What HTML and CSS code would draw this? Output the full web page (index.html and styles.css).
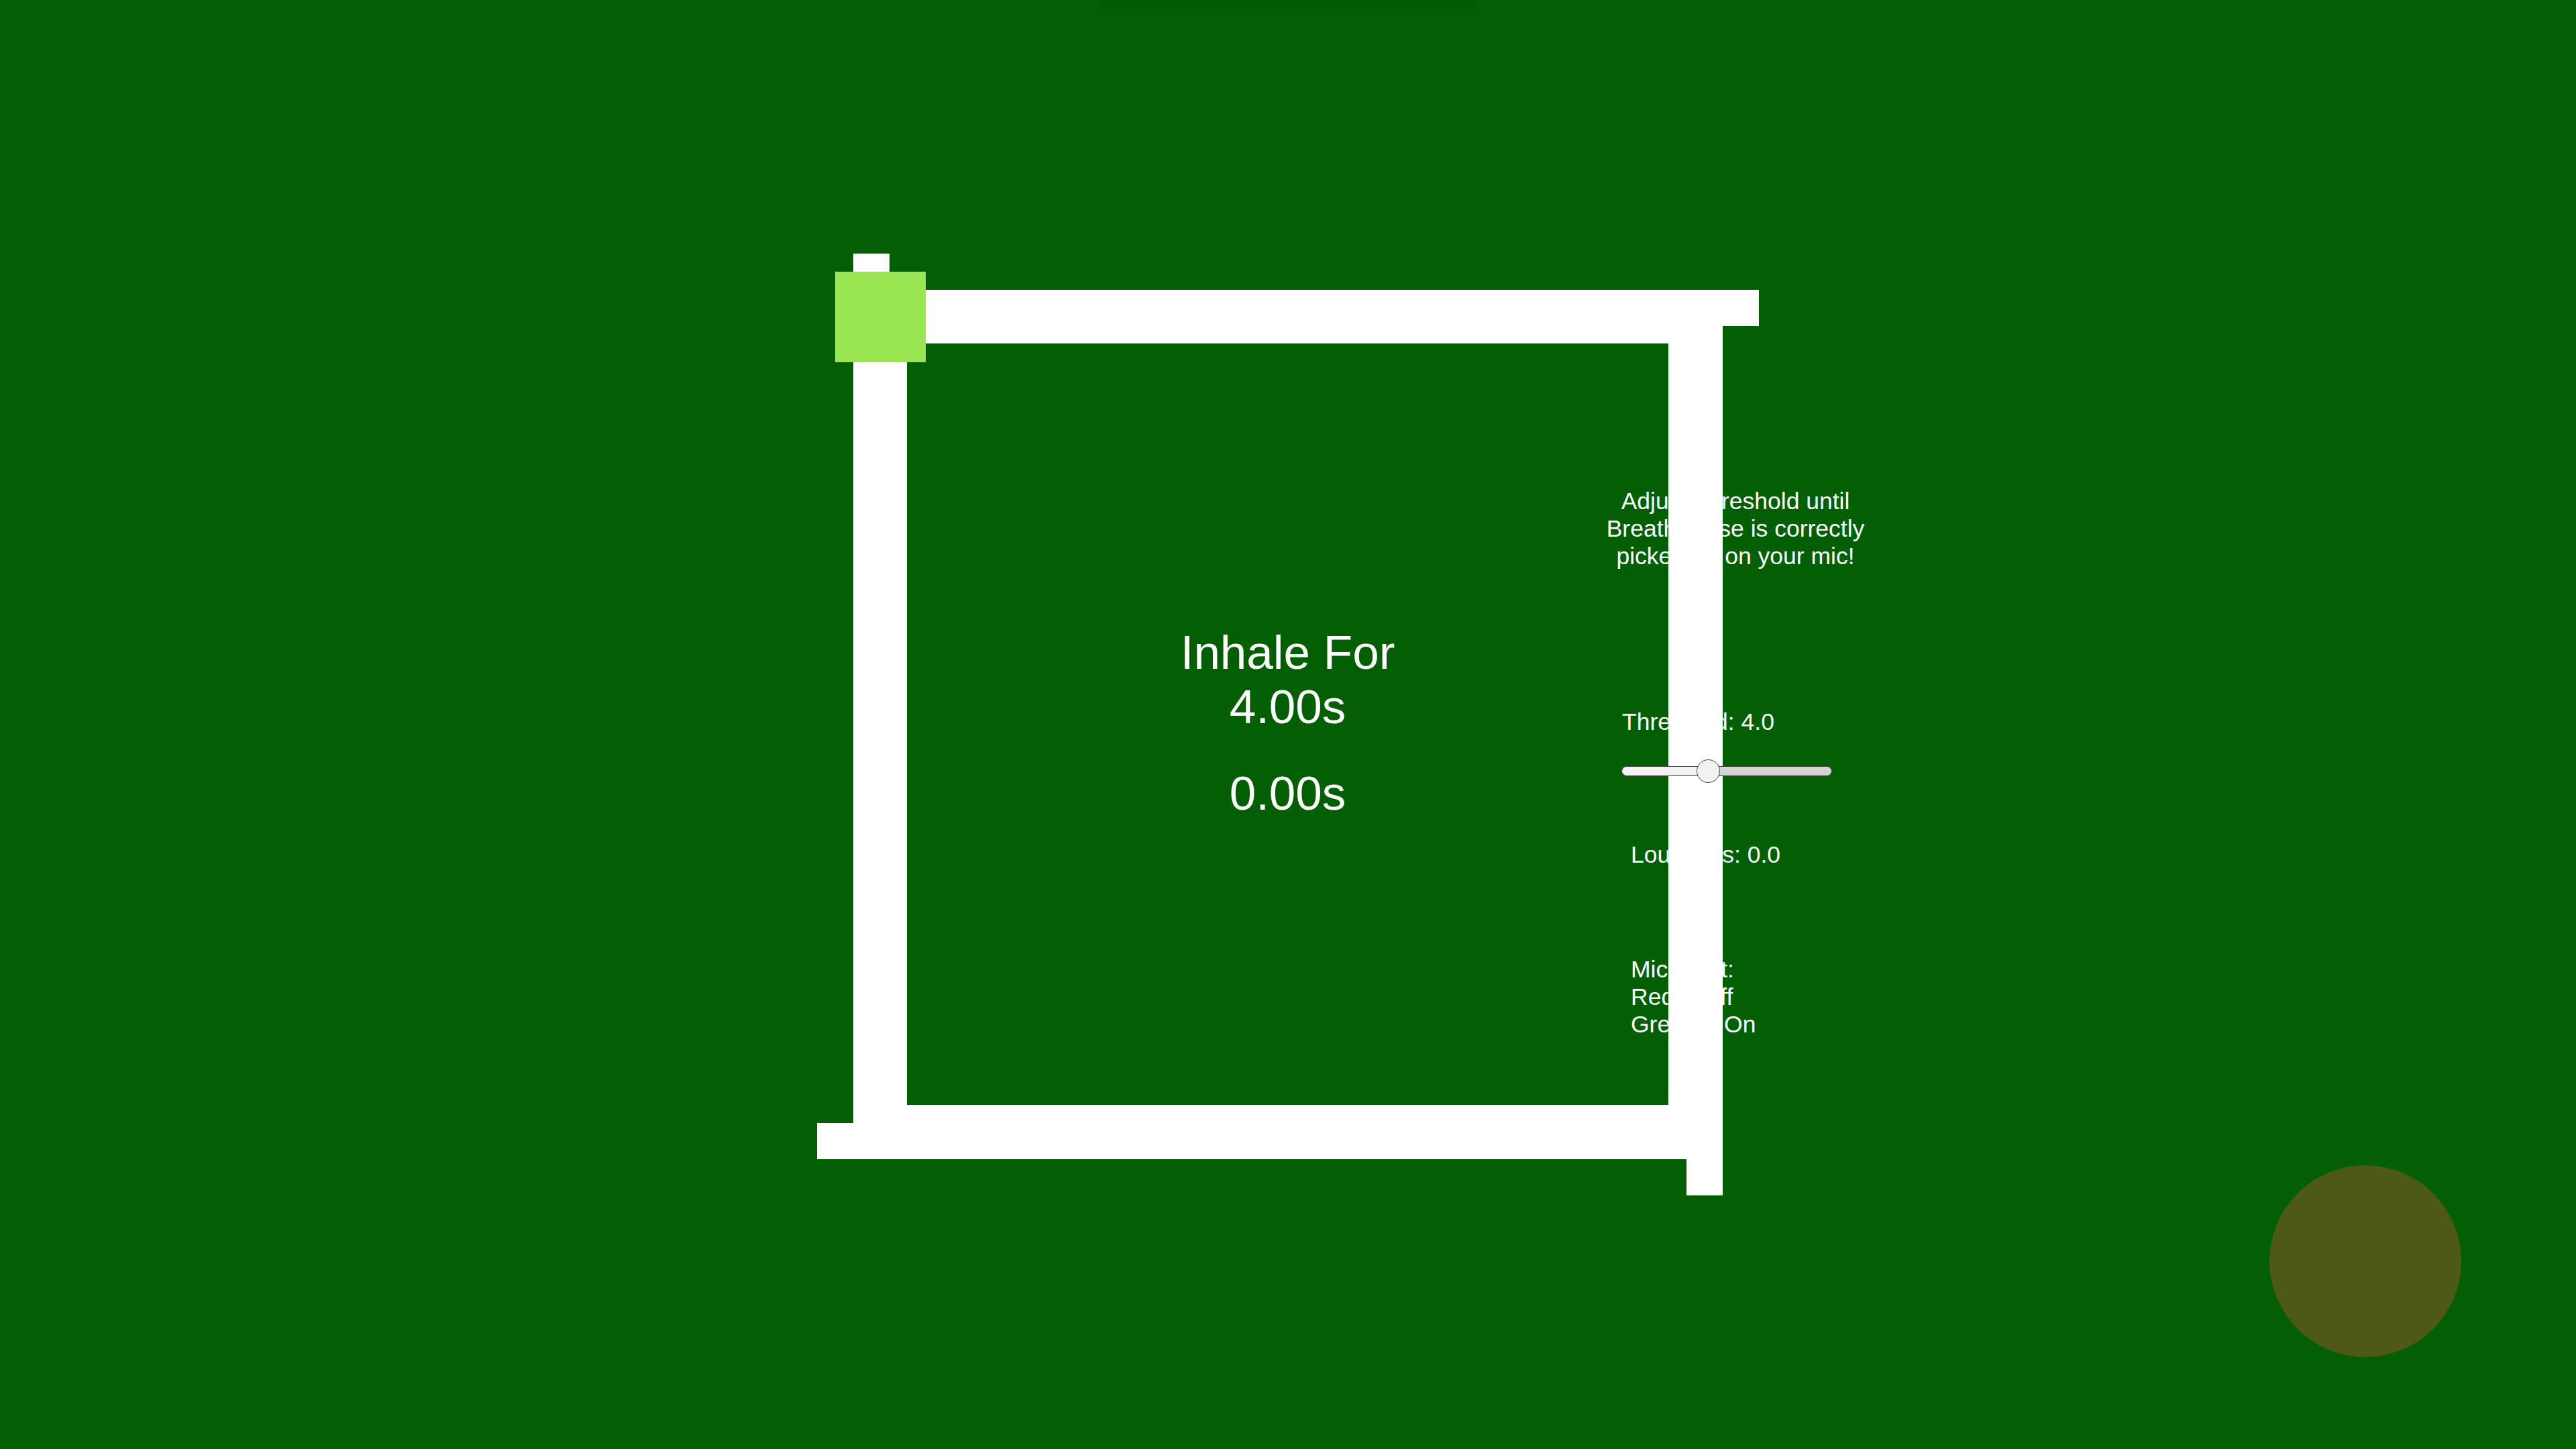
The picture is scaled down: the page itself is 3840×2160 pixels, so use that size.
FILE: index.html
```html
<!DOCTYPE html>
<html lang="en">
<head>
    <meta charset="UTF-8">
    <meta name="viewport" content="width=device-width, initial-scale=1.0">
    <title>Box Breathing</title>
    <link rel="stylesheet" href="styles.css">
</head>
<body>

    <div class="top-shade"></div>

    <div class="box">
        <span class="stub stub-top"></span>
        <span class="stub stub-right"></span>
        <span class="stub stub-bottom"></span>
        <span class="stub stub-left"></span>

        <div class="box-inner">
            <div class="phase">Inhale For<br>4.00s</div>
            <div class="timer">0.00s</div>
        </div>

        <div class="marker"></div>
    </div>

    <div class="mic-panel">
        <p class="hint">Adjust Threshold until<br>Breath Noise is correctly<br>picked up on your mic!</p>
        <p class="threshold">Threshold: 4.0</p>
        <div class="slider">
            <div class="slider-fill"></div>
            <div class="slider-knob"></div>
        </div>
        <p class="loudness">Loudness: 0.0</p>
        <p class="mic-state">Mic Input:<br>Red = Off<br>Green = On</p>
    </div>

    <div class="breath-circle"></div>

</body>
</html>
```

FILE: styles.css
```css
body {
    font-family: 'Liberation Sans', Arial, sans-serif;
    background-color: #045E04; /* тёмно-зелёный фон */
    color: #FFFFFF;
    margin: 0;
    padding: 0;
    height: 100vh;
    display: grid;
    place-items: center;
    position: relative;
    overflow: hidden;
}
.top-shade {
    position: absolute;
    top: 0;
    left: 1640px;
    width: 560px;
    height: 13px;
    background-color: rgba(0, 0, 0, 0.04);
}

/* Рамка квадрата дыхания: середина прозрачная, текст панели виден сквозь неё */
.box {
    position: relative;
    z-index: 1;
    width: 1296px;
    height: 1296px;
    box-sizing: border-box;
    border: solid #FFFFFF;
    border-width: 80px 81px 81px 80px;
    box-shadow: inset 0 0 2px 0 #045E04;
}
.box-inner {
    width: 100%;
    height: 100%;
    padding-bottom: 5px;
    box-sizing: border-box;
    display: flex;
    flex-direction: column;
    align-items: center;
    justify-content: center;
    text-align: center;
}
.phase,
.timer {
    font-size: 71px;
}
.timer {
    margin-top: 48px;
}
.stub {
    position: absolute;
    width: 54px;
    height: 54px;
    background-color: #FFFFFF;
}
.stub-top {
    left: -80px;
    top: -134px;
}
.stub-right {
    left: 1216px;
    top: -80px;
}
.stub-bottom {
    left: 1162px;
    top: 1216px;
}
.stub-left {
    left: -134px;
    top: 1162px;
}
.marker {
    position: absolute;
    left: -107px;
    top: -107px;
    width: 135px;
    height: 135px;
    background-color: #9AE552;
}

/* Панель микрофона */
.mic-panel {
    position: absolute;
    left: 2380px;
    top: 727px;
    width: 414px;
    display: flex;
    flex-direction: column;
    font-size: 35.5px;
    line-height: 41px;
}
.mic-panel p {
    margin: 0;
}
.hint {
    text-align: center;
}
.mic-panel .threshold {
    margin-top: 206px;
    margin-left: 38px;
}
.slider {
    position: relative;
    z-index: 2;
    width: 314px;
    height: 35px;
    margin-top: 35px;
    margin-left: 37px;
}
.slider::before {
    content: '';
    position: absolute;
    left: 0;
    right: 0;
    top: 10px;
    height: 15px;
    box-sizing: border-box;
    border: 1px solid #3A3A3A;
    border-radius: 8px;
    background-color: #D4D4D4;
}
.slider-fill {
    position: absolute;
    left: 0;
    top: 10px;
    width: 130px;
    height: 15px;
    box-sizing: border-box;
    border: 1px solid #3A3A3A;
    border-right: none;
    border-radius: 8px 0 0 8px;
    background-color: #F3F3F3;
}
.slider-knob {
    position: absolute;
    left: 112px;
    top: 0;
    width: 35px;
    height: 35px;
    box-sizing: border-box;
    border: 1px solid #4A4A4A;
    border-radius: 50%;
    background-color: #F2F2F2;
}
.mic-panel .loudness {
    margin-top: 87px;
    margin-left: 51px;
}
.mic-panel .mic-state {
    margin-top: 130px;
    margin-left: 51px;
}

/* Индикатор дыхания */
.breath-circle {
    position: absolute;
    right: 171px;
    bottom: 137px;
    width: 286px;
    height: 286px;
    border-radius: 50%;
    background-color: #4E5918;
}
```
